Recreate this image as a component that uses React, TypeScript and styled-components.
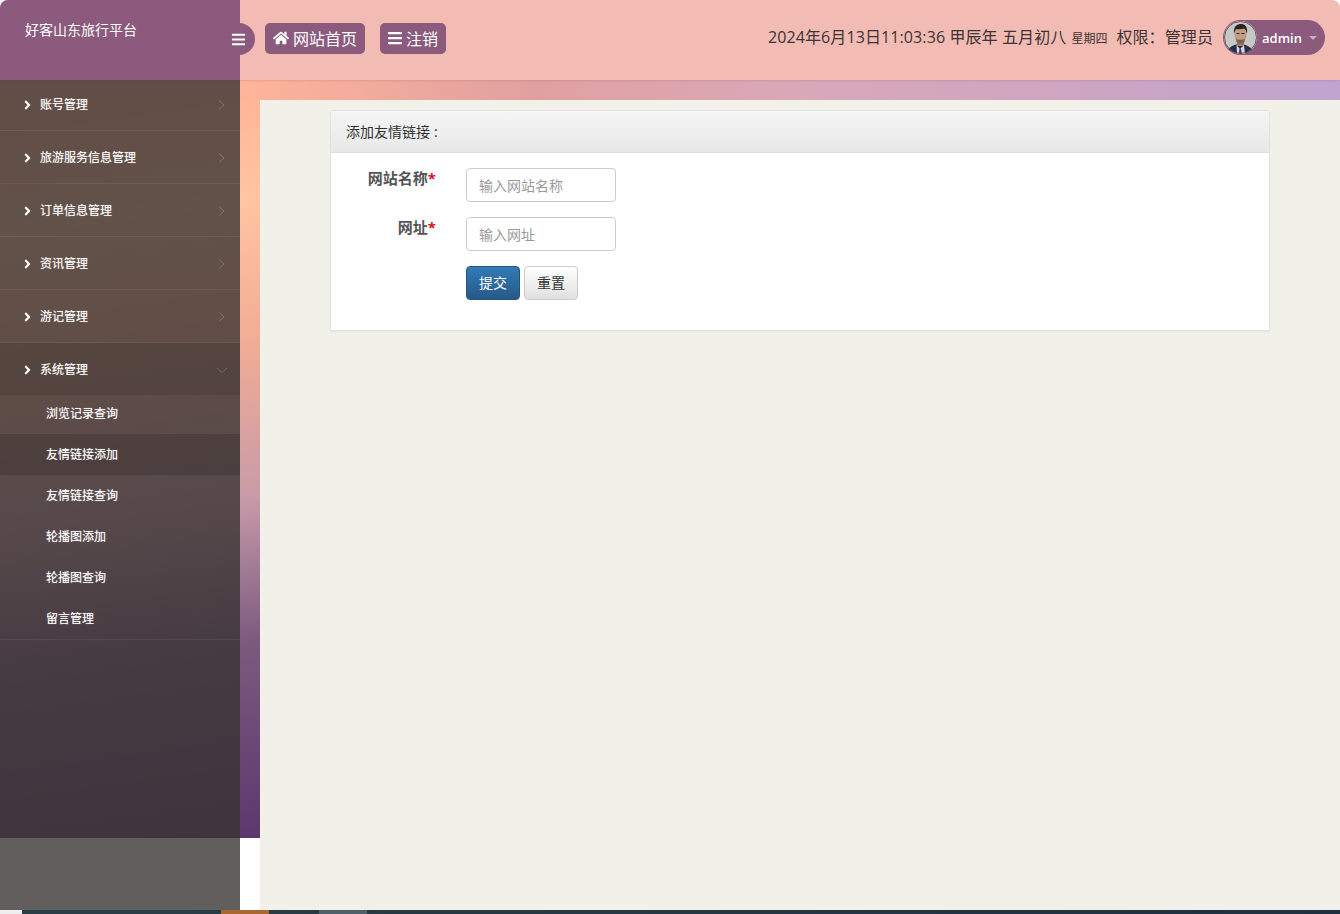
import React from 'react'
import styled, { createGlobalStyle } from 'styled-components'
import { FaAngleRight, FaBars, FaHome } from 'react-icons/fa'

const GlobalStyle = createGlobalStyle`
    html, body {
        margin:0;
        padding:0;
        background:#fff;
    }
    * {
        box-sizing:border-box;
    }
    body {
        font-family:"Open Sans","Noto Sans CJK SC",sans-serif;
        font-size:14px;
        color:#333;
    }
`

const Page = styled.div`
    width:1340px;
    height:914px;
    display:flex;
    flex-direction:column;
    overflow:hidden;
`

const Header = styled.header`
    height:80px;
    flex:none;
    display:flex;
    position:relative;
    z-index:1;
    background:#f2bbb3;
    border-radius:8px 8px 0 0;
    box-shadow:0 1px 2px rgba(90,50,50,.14);
`

const Logo = styled.div`
    width:240px;
    flex:none;
    position:relative;
    padding:20px 0 0 25px;
    background:#8b5a7c;
    border-radius:8px 0 0 0;
    color:#fff;
    font-size:14px;
    line-height:20px;
`

const Toggle = styled.div`
    position:absolute;
    top:23px;
    right:-15px;
    width:32px;
    height:32px;
    padding-right:1px;
    border-radius:50%;
    background:#8b5a7c;
    display:flex;
    align-items:center;
    justify-content:center;
    font-size:15px;
`

const HeaderBody = styled.div`
    flex:1;
    display:flex;
    align-items:flex-start;
    justify-content:space-between;
    padding:20px 15px 0 25px;
`

const NavLinks = styled.div`
    display:flex;
    gap:15px;
    padding-top:3px;
`

const NavLink = styled.a`
    height:31px;
    padding:0 8px 2px;
    display:flex;
    align-items:center;
    gap:4px;
    background:#8b5a7c;
    border-radius:5px;
    color:#fff;
    font-size:16px;
`

const NavBars = styled(FaBars)`
    width:16px;
    height:16px;
    margin:0 -1px;
`

const HeaderInfo = styled.div`
    display:flex;
    align-items:center;
    height:35px;
    font-size:16px;
    color:#3d3434;
`

const InfoText = styled.div`
    margin-bottom:3px;
    letter-spacing:.1px;
`

const Week = styled.small`
    font-size:12px;
    letter-spacing:0;
    margin:0 9px 0 5px;
`

const UserPill = styled.div`
    width:102px;
    height:35px;
    margin-left:10px;
    padding:1px;
    display:flex;
    align-items:center;
    background:#8b5a7c;
    border-radius:18px;
    color:#fff;
    font-size:13px;
    font-weight:600;
`

const Avatar = styled.svg`
    width:33px;
    height:33px;
    flex:none;
    border-radius:50%;
    margin-right:5px;
    filter:blur(.25px);
`

const Caret = styled.i`
    margin-left:7px;
    border-top:4px solid #c9aebf;
    border-left:4px solid transparent;
    border-right:4px solid transparent;
`

const Main = styled.div`
    flex:1;
    display:flex;
    min-height:0;
    background:
        linear-gradient(90deg,#ffb49a 18%,#e0a0a0 40%,#d9a8b9 60%,#cfa5c0 78%,#bfa5cf 100%) no-repeat 0 0 / 100% 20px,
        linear-gradient(172deg,#ffb497 5%,#ffc5a2 16%,#f2ad95 31%,#c89aa8 48%,#a88098 54%,#7c5a7e 63%,#5a386e 84%,#4f3068 100%) no-repeat 0 0 / 100% 758px;
`

const Sidebar = styled.nav`
    width:240px;
    flex:none;
    background:rgba(56,51,49,.79);
`

const Row = styled.div<{open?:boolean}>`
    height:${props=>props.open?'52px':'53px'};
    padding:17px 13px 0 24px;
    display:flex;
    align-items:flex-start;
    background:${props=>props.open?'rgba(0,0,0,.1)':'transparent'};
    border-bottom:${props=>props.open?'none':'1px solid rgba(255,255,255,.07)'};
    color:#fff;
    font-size:12px;
    line-height:20px;
    text-shadow:0 0 1px rgba(255,255,255,.5);
    &:first-child {
        height:51px;
        padding-top:15px;
    }
`

const RowIcon = styled(FaAngleRight)`
    width:7px;
    height:20px;
    margin-right:9px;
    color:#fff;
`

const RowLabel = styled.span`
    flex:1;
`

const Chevron = styled.svg`
    width:10px;
    height:20px;
    fill:none;
    stroke:rgba(255,255,255,.2);
    stroke-width:1;
`

const SubList = styled.ul`
    margin:0;
    padding:0;
    list-style:none;
    border-bottom:1px solid rgba(255,255,255,.07);
`

const SubItem = styled.li<{active?:boolean}>`
    height:41px;
    padding-left:46px;
    background:${props=>props.active?'rgba(0,0,0,.14)':'transparent'};
    color:#fff;
    font-size:12px;
    line-height:41px;
    text-shadow:0 0 1px rgba(255,255,255,.5);
    &:first-child {
        height:39px;
        line-height:37px;
    }
`

const Content = styled.main`
    flex:1;
    margin:20px 0 0 20px;
    padding:10px 70px;
    background:#f2f1e9;
`

const Card = styled.section`
    height:221px;
    background:#fff;
    border:1px solid #e2e2e2;
    border-radius:3px;
    box-shadow:0 1px 2px rgba(0,0,0,.06);
`

const CardTitle = styled.h3`
    height:42px;
    margin:0;
    padding:0 15px;
    background:linear-gradient(#f5f5f5,#e8e8e8);
    border-bottom:1px solid #ddd;
    font-size:14px;
    font-weight:400;
    line-height:41px;
    color:#333;
`

const TitleColon = styled.span`
    margin-left:4px;
`

const Form = styled.form`
    display:grid;
    grid-template-columns:105px 150px;
    column-gap:30px;
    row-gap:15px;
    padding-top:15px;
`

const Label = styled.label`
    text-align:right;
    font-size:15px;
    font-weight:700;
    line-height:20px;
    color:#555;
`

const Required = styled.em`
    font-style:normal;
    color:#d8111b;
`

const Input = styled.input`
    width:150px;
    height:34px;
    padding:0 12px;
    background:#fff;
    border:1px solid #ccc;
    border-radius:4px;
    font:14px "Open Sans","Noto Sans CJK SC",sans-serif;
    &::placeholder {
        color:#999;
    }
`

const Buttons = styled.div`
    grid-column:2;
    display:flex;
    gap:4px;
`

const Button = styled.button<{primary?:boolean}>`
    width:54px;
    height:34px;
    padding:0 0 2px;
    border:1px solid ${props=>props.primary?'#245580':'#ccc'};
    border-radius:4px;
    background:${props=>props.primary
        ?'linear-gradient(#337ab7,#265a88)'
        :'linear-gradient(#fff,#e0e0e0)'};
    color:${props=>props.primary?'#fff':'#333'};
    font:14px "Open Sans","Noto Sans CJK SC",sans-serif;
`

const Taskbar = styled.div`
    height:4px;
    flex:none;
    display:flex;
    background:linear-gradient(90deg,#2a3f45,#1f2f40);
`

const TaskSlot = styled.span<{width:number;color?:string;gap?:number}>`
    width:${props=>props.width}px;
    margin-left:${props=>props.gap||0}px;
    background:${props=>props.color||'transparent'};
`

const menus = ['账号管理','旅游服务信息管理','订单信息管理','资讯管理','游记管理']
const subMenus = ['浏览记录查询','友情链接添加','友情链接查询','轮播图添加','轮播图查询','留言管理']

const App:React.FC = () => {
    return (
        <Page>
            <GlobalStyle/>
            <Header>
                <Logo>
                    好客山东旅行平台
                    <Toggle><FaBars/></Toggle>
                </Logo>
                <HeaderBody>
                    <NavLinks>
                        <NavLink><FaHome size={16}/>网站首页</NavLink>
                        <NavLink><NavBars/>注销</NavLink>
                    </NavLinks>
                    <HeaderInfo>
                        <InfoText>
                            2024年6月13日11:03:36 甲辰年 五月初八
                            <Week>星期四</Week>
                            权限：管理员
                        </InfoText>
                        <UserPill>
                            <Avatar viewBox="0 0 33 33">
                                <rect width="33" height="33" fill="#c6c8c6"/>
                                <path d="M2 33c1-6 6-8 10-9.500h8c4 1.500 9 3.500 10 9.500z" fill="#252c45"/>
                                <path d="M12.500 24l3.500 4 4-4 1 9h-8z" fill="#d8d9e6"/>
                                <path d="M15.500 27.500h1.500l1 5.500h-3.200z" fill="#3a3f66"/>
                                <rect x="13" y="19" width="7" height="6" fill="#a67a64"/>
                                <ellipse cx="16.500" cy="14" rx="6" ry="8.500" fill="#c39a84"/>
                                <path d="M10 13c-1-8 3.500-10 7-10s7 2 6 10c-.6-3-1.500-4.500-3-5.500-3 1-5.500 .8-7.500 .5-1.500 1-2 3-2.500 5z" fill="#2b2422"/>
                                <path d="M12.500 12.500h3M17.500 12.500h3" stroke="#3a2a24" strokeWidth="1"/>
                                <path d="M12 18c2 1 7 1 9 0l-1 4-3.500 1-3.500-1z" fill="#7d5f52"/>
                                <circle cx="16.500" cy="16.500" r="16" fill="none" stroke="#6d4a62" strokeWidth="1"/>
                            </Avatar>
                            admin
                            <Caret/>
                        </UserPill>
                    </HeaderInfo>
                </HeaderBody>
            </Header>
            <Main>
                <Sidebar>
                    {menus.map(item=>(
                        <Row key={item}>
                            <RowIcon/>
                            <RowLabel>{item}</RowLabel>
                            <Chevron viewBox="0 0 10 20"><path d="M2 5.500l5 4.500-5 4.500"/></Chevron>
                        </Row>
                    ))}
                    <Row open>
                        <RowIcon/>
                        <RowLabel>系统管理</RowLabel>
                        <Chevron viewBox="0 0 10 20"><path d="M0 8l5 4.500 5-4.500"/></Chevron>
                    </Row>
                    <SubList>
                        {subMenus.map((item,i)=>(
                            <SubItem key={item} active={i===1}>{item}</SubItem>
                        ))}
                    </SubList>
                </Sidebar>
                <Content>
                    <Card>
                        <CardTitle>添加友情链接<TitleColon>:</TitleColon></CardTitle>
                        <Form>
                            <Label>网站名称<Required>*</Required></Label>
                            <Input placeholder="输入网站名称"/>
                            <Label>网址<Required>*</Required></Label>
                            <Input placeholder="输入网址"/>
                            <Buttons>
                                <Button primary type="button">提交</Button>
                                <Button type="button">重置</Button>
                            </Buttons>
                        </Form>
                    </Card>
                </Content>
            </Main>
            <Taskbar>
                <TaskSlot width={22} color="#eee"/>
                <TaskSlot width={48} gap={199} color="#a8682f"/>
                <TaskSlot width={48} gap={50} color="#4f6068"/>
            </Taskbar>
        </Page>
    )
}

export default App
